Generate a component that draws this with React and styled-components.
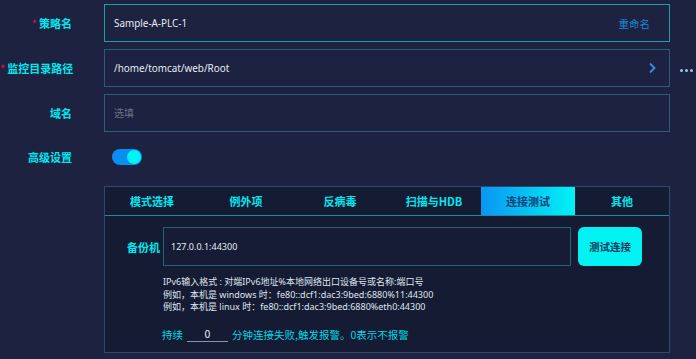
import React from "react";
import styled, { createGlobalStyle } from "styled-components";

const GlobalStyle = createGlobalStyle`
  html, body {
    margin: 0;
    padding: 0;
    background: #1c2240;
    font-family: "Noto Sans", "Noto Sans CJK SC", sans-serif;
  }
`;

const Page = styled.div`
  width: 696px;
  height: 359px;
  overflow: hidden;
  background: #1c2240;
  padding-top: 4px;
  box-sizing: border-box;
`;

const FormRow = styled.div`
  display: grid;
  grid-template-columns: 72px 566px auto;
  column-gap: 32px;
  align-items: center;
  height: ${props => props.height || "38px"};
  margin-bottom: ${props => props.gap || "7px"};
`;

const Label = styled.div`
  text-align: right;
  color: #00e8f0;
  font-family: "Noto Sans CJK SC", sans-serif;
  font-weight: 700;
  font-size: 11px;
  white-space: nowrap;
`;

const Star = styled.span`
  color: #e0182a;
  margin-right: 2px;
  font-weight: 400;
`;

const InputBox = styled.div`
  height: 38px;
  box-sizing: border-box;
  border: 1px solid ${props => (props.focused ? "#16a0ac" : "#2a5e74")};
  background: #1c2240;
  display: flex;
  align-items: center;
  justify-content: space-between;
  padding: 0 ${props => props.padRight || "19px"} 0 9px;
  font-size: 9.9px;
  color: ${props => (props.placeholder ? "#6b7286" : "#e6ecf4")};
  font-family: "Noto Sans", "Noto Sans CJK SC", sans-serif;
`;

const Rename = styled.span`
  color: #1c86d6;
  font-size: 10.5px;
  font-family: "Noto Sans CJK SC", sans-serif;
`;

const More = styled.div`
  display: flex;
  gap: 2px;
  margin-left: -22px;
  margin-top: 4px;
`;

const Dot = styled.span`
  width: 3px;
  height: 3px;
  border-radius: 50%;
  background: #9cc4ec;
`;

const Toggle = styled.div`
  width: 30px;
  height: 16px;
  border-radius: 8px;
  background: #0a8ff0;
  position: relative;
  margin-left: 8px;
`;

const Knob = styled.span`
  position: absolute;
  right: 1px;
  top: 1px;
  width: 14px;
  height: 14px;
  border-radius: 50%;
  background: #00f4f4;
`;

const Panel = styled.div`
  margin-left: 104px;
  width: 566px;
  height: 167px;
  box-sizing: border-box;
  border: 1px solid #2c4a70;
  background: #161b34;
`;

const Tabs = styled.div`
  display: grid;
  grid-template-columns: repeat(6, 1fr);
  height: 28px;
  border-bottom: 1px solid #1a8e9c;
`;

const Tab = styled.div`
  display: flex;
  align-items: center;
  justify-content: center;
  font-family: "Noto Sans CJK SC", sans-serif;
  font-weight: 700;
  font-size: 11px;
  color: ${props => (props.active ? "#12437a" : "#00e8f0")};
  background: ${props =>
    props.active ? "linear-gradient(90deg, #0a96f4 0%, #00f2f4 100%)" : "transparent"};
`;

const Body = styled.div`
  padding: 11px 0 0 22px;
`;

const BackupRow = styled.div`
  display: flex;
  align-items: center;
  gap: 5px;
`;

const BackupLabel = styled.div`
  color: #00e8f0;
  font-family: "Noto Sans CJK SC", sans-serif;
  font-weight: 700;
  font-size: 11px;
  width: 31px;
  white-space: nowrap;
`;

const BackupInput = styled.div`
  width: 408px;
  height: 39px;
  box-sizing: border-box;
  border: 1px solid #226478;
  background: #171c36;
  display: flex;
  align-items: center;
  padding-left: 7px;
  color: #e6ecf4;
  font-size: 9px;
`;

const TestButton = styled.button`
  width: 64px;
  height: 39px;
  margin-left: 2px;
  border: none;
  border-radius: 6px;
  background: #00f2f2;
  color: #143a5c;
  font-family: "Noto Sans CJK SC", sans-serif;
  font-weight: 700;
  font-size: 10.5px;
  padding: 0;
`;

const Hint = styled.div`
  margin: 10px 0 0 36px;
  color: #dfe6ee;
  font-size: 9px;
  line-height: 12.6px;
  font-family: "Noto Sans", "Noto Sans CJK SC", sans-serif;
`;

const AlertLine = styled.div`
  margin: 12px 0 0 35px;
  display: flex;
  align-items: flex-end;
  color: #00d8e4;
  font-size: 10.5px;
  font-family: "Noto Sans CJK SC", sans-serif;
`;

const Minutes = styled.span`
  width: 41px;
  margin: 0 4px 0 4px;
  border-bottom: 1px solid #8a92a8;
  text-align: center;
  color: #e6ecf4;
  line-height: 15px;
`;

const tabs = ["模式选择", "例外项", "反病毒", "扫描与HDB", "连接测试", "其他"];

const Chevron = () => (
  <svg width="8" height="12" viewBox="0 0 8 12">
    <path d="M2 1.5 L6.5 6 L2 10.5" stroke="#3a90e6" strokeWidth="1.8" fill="none" />
  </svg>
);

export default function App() {
  return (
    <Page>
      <GlobalStyle />
      <FormRow>
        <Label>
          <Star>*</Star>策略名
        </Label>
        <InputBox focused>
          <span>Sample-A-PLC-1</span>
          <Rename>重命名</Rename>
        </InputBox>
      </FormRow>
      <FormRow>
        <Label>
          <Star>*</Star>监控目录路径
        </Label>
        <InputBox padRight="13px">
          <span>/home/tomcat/web/Root</span>
          <Chevron />
        </InputBox>
        <More>
          <Dot />
          <Dot />
          <Dot />
        </More>
      </FormRow>
      <FormRow gap="11px">
        <Label>域名</Label>
        <InputBox placeholder="true">选填</InputBox>
      </FormRow>
      <FormRow height="28px" gap="15px">
        <Label>高级设置</Label>
        <Toggle>
          <Knob />
        </Toggle>
      </FormRow>
      <Panel>
        <Tabs>
          {tabs.map(t => (
            <Tab key={t} active={t === "连接测试"}>
              {t}
            </Tab>
          ))}
        </Tabs>
        <Body>
          <BackupRow>
            <BackupLabel>备份机</BackupLabel>
            <BackupInput>127.0.0.1:44300</BackupInput>
            <TestButton>测试连接</TestButton>
          </BackupRow>
          <Hint>
            <div>IPv6输入格式 : 对端IPv6地址%本地网络出口设备号或名称:端口号</div>
            <div>例如，本机是 windows 时：fe80::dcf1:dac3:9bed:6880%11:44300</div>
            <div>例如，本机是 linux 时：fe80::dcf1:dac3:9bed:6880%eth0:44300</div>
          </Hint>
          <AlertLine>
            持续
            <Minutes>0</Minutes>
            分钟连接失败,触发报警。0表示不报警
          </AlertLine>
        </Body>
      </Panel>
    </Page>
  );
}
